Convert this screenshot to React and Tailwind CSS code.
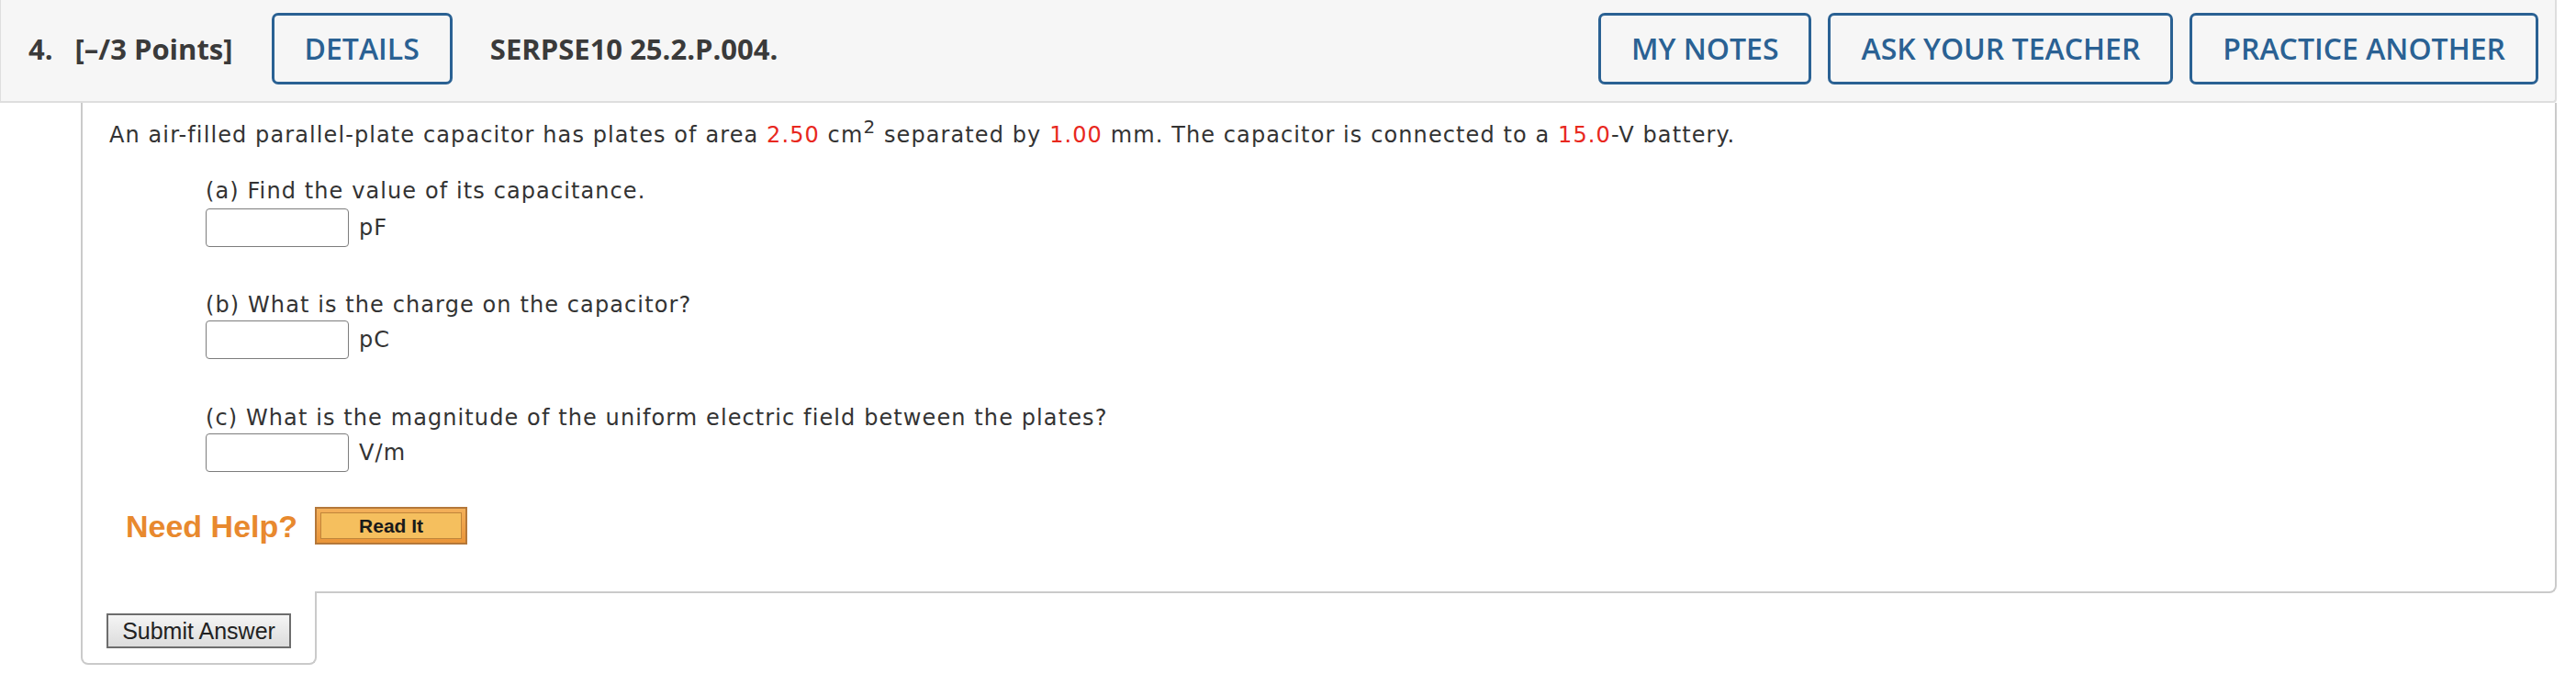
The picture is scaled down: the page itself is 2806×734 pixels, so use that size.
const headerFont = { fontFamily: '"Open Sans", "Noto Sans", sans-serif' };

function OutlineButton({ children }) {
  return (
    <button className="h-[78px] px-[33px] border-[3px] border-[#2a6193] rounded-[7px] bg-[#f6f6f6] text-[32px] font-semibold text-[#2a6193] leading-none whitespace-nowrap">
      {children}
    </button>
  );
}

function Answer({ label, unit, top, inputTop }) {
  return (
    <div className={top}>
      <div className="leading-[30px]">{label}</div>
      <div className={`flex items-center gap-[11px] ${inputTop}`}>
        <div className="w-[156px] h-[42px] border-[1.5px] border-[#7d7d7d] rounded-[4px] bg-white" />
        <span className="leading-[30px]">{unit}</span>
      </div>
    </div>
  );
}

export default function App() {
  const red = "text-[#e8281e]";
  return (
    <div className="w-[2806px] h-[734px] bg-white">
      <div className="w-[2785px]">
        <div
          className="h-[112px] bg-[#f6f6f6] border-l border-r-2 border-b-2 border-[#dedede] rounded-br-[4px] flex items-start pt-[14px] pl-[30px] pr-[18px]"
          style={headerFont}
        >
          <div className="flex items-center h-[78px] text-[31px] font-bold text-[#3a3a3a]">
            <span>4.</span>
            <span className="ml-[24px]">[–/3 Points]</span>
            <div className="ml-[42px]">
              <OutlineButton>DETAILS</OutlineButton>
            </div>
            <span className="ml-[41px]">SERPSE10 25.2.P.004.</span>
          </div>
          <div className="ml-auto flex gap-[18px]">
            <OutlineButton>MY NOTES</OutlineButton>
            <OutlineButton>ASK YOUR TEACHER</OutlineButton>
            <OutlineButton>PRACTICE ANOTHER</OutlineButton>
          </div>
        </div>

        <div className="ml-[88px]">
          <div
            className="border-l-2 border-r-2 border-b-2 border-[#cacaca] rounded-br-[8px] pl-[29px] pt-[20px] pb-[51px] text-[24px] tracking-[1.1px] text-[#333333]"
            style={{ fontFamily: '"DejaVu Sans", Verdana, sans-serif' }}
          >
            <p className="leading-[30px]">
              An air-filled parallel-plate capacitor has plates of area <span className={red}>2.50</span> cm
              <sup className="text-[20px]">2</sup> separated by <span className={red}>1.00</span> mm. The capacitor is
              connected to a <span className={red}>15.0</span>-V battery.
            </p>
            <div className="ml-[105px]">
              <Answer label="(a) Find the value of its capacitance." unit="pF" top="mt-[31px]" inputTop="mt-[4px]" />
              <Answer label="(b) What is the charge on the capacitor?" unit="pC" top="mt-[48px]" inputTop="mt-[2px]" />
              <Answer
                label="(c) What is the magnitude of the uniform electric field between the plates?"
                unit="V/m"
                top="mt-[49px]"
                inputTop="mt-[2px]"
              />
            </div>
            <div
              className="mt-[38px] ml-[18px] flex items-center tracking-normal"
              style={{ fontFamily: '"Liberation Sans", Arial, sans-serif' }}
            >
              <span className="text-[34px] font-bold text-[#e8892e] leading-none">Need Help?</span>
              <button className="ml-[19px] w-[166px] h-[41px] border-2 border-[#b4783a] bg-gradient-to-b from-[#f3b05a] to-[#ea9538] p-[4px]">
                <div className="h-full border border-[#c0853a] bg-[#f5bf5e] flex items-center justify-center text-[21px] font-bold text-[#1a1a1a] leading-none">
                  Read It
                </div>
              </button>
            </div>
          </div>
          <div className="-mt-[2px] w-[257px] h-[80px] bg-white border-l-2 border-r-2 border-b-2 border-[#cacaca] rounded-b-[8px] pl-[26px] pt-[24px]">
            <button
              className="w-[201px] h-[38px] border-2 border-[#6d6d6d] bg-gradient-to-b from-[#f5f5f5] to-[#dcdcdc] text-[25px] text-[#222222] leading-none"
              style={{ fontFamily: '"Liberation Sans", Arial, sans-serif' }}
            >
              Submit Answer
            </button>
          </div>
        </div>
      </div>
    </div>
  );
}
